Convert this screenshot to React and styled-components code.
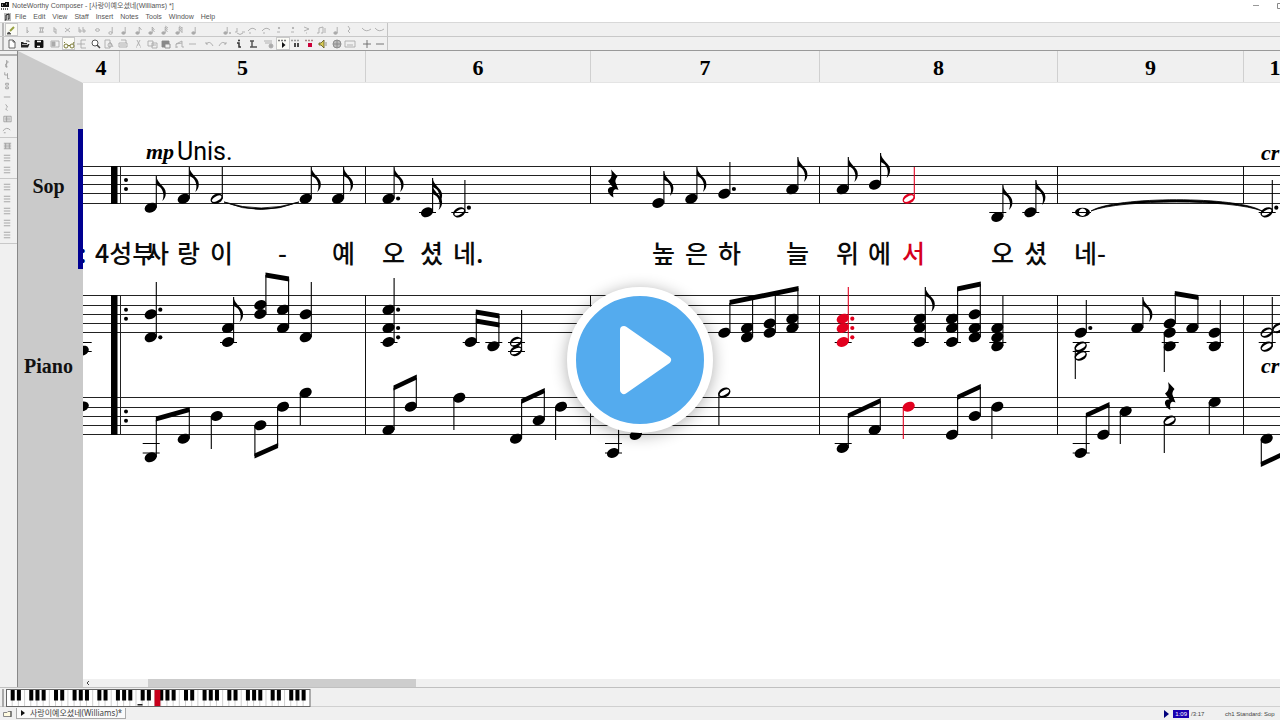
import React from "react";
import styled, { createGlobalStyle, css } from "styled-components";

const GlobalStyle = createGlobalStyle`
  * { box-sizing: border-box; }
  body { margin: 0; background: #f0f0f0; overflow: hidden; }
  button { font: inherit; color: inherit; border: 0; padding: 0; margin: 0; background: none; }
`;

const ui = `"Liberation Sans", "Noto Sans CJK KR", sans-serif`;
const serif = `"Liberation Serif", serif`;
const INK = "#000";
const RED = "#e2001f";

const Window = styled.div`
  position: relative;
  display: flex;
  flex-direction: column;
  height: 100vh;
  background: #f0f0f0;
  font-family: ${ui};
  font-size: 7px;
  color: #555;
  overflow: hidden;
`;
const TitleBar = styled.header`
  display: flex;
  align-items: center;
  height: 12px;
  background: #fff;
  gap: 2px;
`;
const Title = styled.h1`
  flex: 1;
  margin: 0;
  font-size: 7px;
  font-weight: 400;
  line-height: 12px;
  white-space: nowrap;
`;
const WindowButtons = styled.div`
  display: flex;
  gap: 16px;
  margin-right: -4px;
`;
const WindowButton = styled.button`
  display: flex;
  width: 8px;
  height: 12px;
  align-items: center;
`;
const MenuBar = styled.nav`
  display: flex;
  align-items: center;
  height: 11px;
  padding-left: 4px;
  gap: 4px;
  background: #fff;
  border-bottom: 1px solid #d8d8d8;
`;
const MenuItems = styled.div`
  display: flex;
  gap: 7px;
`;
const MenuButton = styled.button`
  font-size: 7px;
  line-height: 10px;
`;
const ToolBarRow = styled.div`
  display: flex;
  height: 14px;
  border-bottom: 1px solid ${(p) => (p.$last ? "#999" : "#c8c8c8")};
`;
const ToolBar = styled.div`
  display: flex;
  align-items: center;
  width: 388px;
  height: 100%;
  padding-left: 5px;
  border-right: 1px solid #c4c4c4;
  box-shadow: inset 2px 0 #f0f0f0, inset 4px 0 #b8b8b8;
`;
const ToolButton = styled.button`
  display: flex;
  align-items: center;
  justify-content: center;
  flex: 1;
  height: 13px;
  color: ${(p) => p.$tone || "#aaa"};
  ${(p) => p.$active && css`background: #fbfbf6; box-shadow: inset 0 0 0 1px #c9c9c9;`}
`;
const ToolGap = styled.span`
  flex: none;
  width: ${(p) => p.$w || 3}px;
`;
const Workspace = styled.main`
  display: flex;
  flex: 1;
  min-height: 0;
`;
const SideTools = styled.aside`
  display: flex;
  flex-direction: column;
  width: 18px;
  padding-top: 3px;
  border-right: 1px solid #888;
`;
const SideGroup = styled.div`
  display: flex;
  flex-direction: column;
  align-items: center;
  padding: 2px 2px 2px 0;
  border-bottom: 1px solid #c8c8c8;
  &:first-child { border-top: 2px solid #b0b0b0; }
`;
const SideButton = styled.button`
  display: flex;
  align-items: center;
  justify-content: center;
  width: 14px;
  height: ${(p) => p.$h}px;
  color: #999;
`;
const StaffPanel = styled.section`
  position: relative;
  width: 65px;
  background: #cacaca;
  clip-path: polygon(0 0, 100% 32px, 100% 100%, 0 100%);
  padding-top: 123px;
`;
const StaffName = styled.div`
  height: 24px;
  margin-bottom: 156px;
  padding-right: 4px;
  font: bold 20px/24px ${serif};
  text-align: center;
  color: #111;
`;
const ActiveStaff = styled.div`
  position: absolute;
  right: 0;
  top: 78px;
  width: 5px;
  height: 140px;
  background: #000091;
`;
const ScoreColumn = styled.section`
  display: flex;
  flex-direction: column;
  flex: 1;
  min-width: 0;
`;
const Ruler = styled.div`
  display: flex;
  height: 32px;
  border-bottom: 1px solid #e4e4e4;
  overflow: hidden;
`;
const RulerCell = styled.div`
  flex: none;
  width: ${(p) => p.$w}px;
  border-right: 1px solid #d0d0d0;
  font: bold 22px/34px ${serif};
  text-align: center;
  color: #000;
`;
const Canvas = styled.div`
  position: relative;
  flex: 1;
  min-height: 0;
  background: #fff;
  overflow: hidden;
`;
const Notation = styled.svg`
  display: block;
  width: 100%;
  height: 100%;
`;
const Mark = styled.span`
  position: absolute;
  left: ${(p) => p.$x - 83}px;
  top: ${(p) => p.$y - 83}px;
  white-space: nowrap;
  color: ${INK};
`;
const Lyric = styled(Mark)`
  font: 500 25px/32px "Noto Sans CJK KR", sans-serif;
  color: ${(p) => p.$color || "#0a0a0a"};
`;
const Dynamic = styled(Mark)`
  font: italic bold 22px/28px ${serif};
`;
const Direction = styled(Mark)`
  font: 25px/32px Roboto, sans-serif;
`;
const ScrollTrack = styled.div`
  display: flex;
  height: 8px;
  background: #f0f0f0;
`;
const ScrollArrow = styled.button`
  width: 10px;
  display: flex;
  align-items: center;
  justify-content: center;
  color: #444;
`;
const ScrollThumb = styled.div`
  width: 268px;
  margin-left: 55px;
  background: #cdcdcd;
`;
const KeyboardStrip = styled.div`
  height: 20px;
  padding: 1px 0 0 2px;
  border-top: 1px solid #c0c0c0;
  border-bottom: 1px solid #d0d0d0;
`;
const StatusBar = styled.footer`
  display: flex;
  align-items: center;
  height: 13px;
  padding-left: 3px;
  color: #444;
`;
const FileTab = styled.button`
  display: flex;
  align-items: center;
  gap: 5px;
  width: 110px;
  height: 11px;
  margin-left: 4px;
  padding-left: 4px;
  border: 1px solid #aaa;
  border-top: 0;
  background: #fafafa;
  font: 8px/10px "Noto Sans", "Noto Sans CJK KR", sans-serif;
  white-space: nowrap;
`;
const StatusRight = styled.div`
  display: flex;
  align-items: center;
  flex: 1;
  justify-content: flex-end;
  font-size: 6px;
  line-height: 10px;
`;
const Elapsed = styled.span`
  margin: 0 2px 0 4px;
  padding: 0 2px;
  line-height: 8px;
  background: #1a00b0;
  color: #fff;
`;
const Total = styled.span`
  width: 34px;
`;
const Channel = styled.span`
  width: 55px;
  white-space: nowrap;
`;
const PlayButton = styled.button`
  position: absolute;
  left: 50%;
  top: 50%;
  width: 146px;
  height: 146px;
  margin: -73px 0 0 -73px;
  border: 9px solid #fff;
  border-radius: 50%;
  background: #54abee;
  box-shadow: 0 2px 16px rgba(0, 0, 0, 0.32);
  svg { display: block; width: 128px; height: 128px; }
`;

/* ---- toolbar icons, drawn on a 12 x 10 grid ---- */
const note = (fill, flags = 0, stem = true) => (
  <>
    <ellipse cx="4.5" cy="8" rx="1.7" ry="1.3" fill={fill ? "currentColor" : "none"} />
    {stem && <path d="M6.2 8V2" />}
    {flags > 0 && <path d="M6.2 2L8.5 5" />}
    {flags > 1 && <path d="M6.2 4L8.5 7" />}
    {flags > 2 && <path d="M6.2 1L9 3" />}
  </>
);
const glyphs = {
  pencil: <><path d="M1 8.5L3 7L5 9H1" fill="#444" /><path d="M4 6L8 2" stroke="#97a040" strokeWidth="2" /></>,
  flat: <path d="M5 2V8Q8 6 5 5.500" />,
  sharp: <path d="M3 3H8M3 7H8M5 2L4 8M7 2L6 8" />,
  natural: <path d="M5 2V7H7M7 9V4H5" />,
  cross: <path d="M3 3L8 7M8 3L3 7" />,
  dflat: <path d="M3 2V7H5V5H3M7 2V7H9V5H7" />,
  whole: <ellipse cx="5.500" cy="5" rx="2" ry="1.300" />,
  half: note(false), quarter: note(true), eighth: note(true, 1), six: note(true, 2), thirty: note(true, 3),
  sixtyfour: <>{note(true, 3)}<path d="M9 2V8" /></>,
  dotted: <>{note(true)}<circle cx="9" cy="8" r=".6" fill="currentColor" /></>,
  tie: <path d="M1 7H3M8 7H11M3 8Q6 11 9 8M3 7V3" />,
  slur: <path d="M1 6Q5 1 9 5M2 8H4" />,
  stacc: <><circle cx="5" cy="3" r=".7" fill="currentColor" /><path d="M3 7H6" /></>,
  accent: <path d="M3 2L8 4L3 6M5 8H6" />,
  pair: <path d="M2 8H4V3L8 2V8H6M10 3V8" />,
  rest: <path d="M4 1L6 4L4 6L6 8" />,
  arc: <path d="M1 3Q5 8 10 4" />,
  page: <path d="M3 1H7L9 3V9H3ZM7 1V3H9" fill="#fff" stroke="#555" />,
  open: <><path d="M2 8.500V3H4L5 4H8V5H10.500L9 8.500Z" fill="#222" stroke="none" /><path d="M3 5.500H9" stroke="#bbb" /><path d="M7 2H10V3" stroke="#444" /></>,
  save: <><path d="M2 1.500H10V8.500H2Z" fill="#111" stroke="#111" /><path d="M4 2.500H8M4 7.500H7" stroke="#fff" strokeWidth="1.500" /></>,
  panel: <><path d="M2 2H10V8H2Z" /><path d="M3 3H6V7H3Z" fill="currentColor" /></>,
  glasses: <path d="M1 4L2 3M1 7Q1 5 3 5T5 7T3 9T1 7M7 7Q7 5 9 5T11 7T9 9T7 7M5 6.500H7M10 5L11 3" />,
  bracket: <path d="M10 1H5V9H10M1 5H9" />,
  zoom: <><circle cx="5" cy="4" r="3" fill="#fff" /><path d="M7 6L10 9" strokeWidth="1.500" /></>,
  preview: <><path d="M2 1H7V9H2ZM7 3L10 8" /><circle cx="7" cy="6" r="2" /></>,
  print: <path d="M2 4H10V8H2ZM4 1H9V4M3 6H9" />,
  cut: <path d="M4 1L7 7M7 1L4 7M3 8H4M7 8H8" />,
  copy: <path d="M1 2H6V7H1ZM5 4H10V9H5ZM6 6H9" />,
  paste: <><path d="M2 2H9V8H2Z" fill="currentColor" /><path d="M5 5H10V9H5Z" fill="#eee" /></>,
  bridge: <path d="M2 9V5L8 2V8M2 5L8 4M2 8H4M8 8H10" />,
  dash: <path d="M2 5H9" />,
  undo: <path d="M2 3V5H4M2 5Q6 1 9 7" />,
  redo: <path d="M9 3V5H7M9 5Q5 1 2 7" />,
  info: <><circle cx="6" cy="1.500" r="1" fill="#333" stroke="none" /><path d="M4 4H6V8H8" stroke="#333" strokeWidth="1.500" /></>,
  beam: <path d="M3 2H7M5 2V8M3 8H10" stroke="#555" strokeWidth="1.500" />,
  list: <><path d="M1 2H9M2 4H9" /><circle cx="8" cy="7" r="2" fill="currentColor" /></>,
  play: <><path d="M1 1.500H10" strokeWidth="1.500" strokeDasharray="2 1" /><path d="M5 3L8.500 6L5 9Z" fill="#111" stroke="none" /></>,
  pause: <><path d="M1 1.500H10" strokeWidth="1.500" strokeDasharray="2 1" /><path d="M5 4V8M8 4V8" stroke="#111" strokeWidth="1.500" /></>,
  stop: <><path d="M1 1.500H10" stroke="#a88" strokeWidth="1.500" strokeDasharray="2 1" /><path d="M4 4H8V8H4Z" fill="#cc0038" stroke="none" /></>,
  speaker: <><path d="M2 4H4L7 1V9L4 6H2Z" fill="#d9cc55" stroke="#66602b" /><path d="M9 3V7" /></>,
  globe: <><circle cx="6" cy="5" r="4" fill="#bbb" /><path d="M2 5H10M6 1V9" /></>,
  keys: <path d="M1 2H11V8H1ZM3 6H9" />,
  plus: <path d="M2 5H10M6 1V9" />,
  minus: <path d="M2 5H10" />,
  clef: <path d="M6 8H4V5L7 3L5 1V9" />,
  key: <path d="M3 2V5H6V3M6 5V9H8" />,
  time: <path d="M4 2H7V4H4ZM4 6H7V8H4Z" />,
  text: <path d="M2 2H10V8H2ZM3 4H9M3 6H9M5 2V8" />,
  bars: <path d="M2 2H10M2 4H10M2 6H10M2 8H10M4 2V8M8 2V8" />,
  lines: <path d="M2 2H9M2 5H9M2 8H9" />,
};
const Glyph = ({ name, size = 12 }) => (
  <svg width={size} height="10" viewBox="0 0 12 10" fill="none" stroke="currentColor" strokeWidth="0.900" aria-hidden="true">
    {glyphs[name]}
  </svg>
);

const noteTools = [
  ["pencil", "#555", true], "|", "flat", "sharp", "natural", "cross", "dflat", "|", "whole", "half", "quarter", "eighth",
  "six", "thirty", "sixtyfour", "|", "quarter", "||", "dotted", "tie", "slur", "slur", "stacc", "stacc", "accent", "pair",
  "|", "quarter", "rest", "|", "arc", "arc",
];
const fileTools = [
  ["page", "#555"], ["open", "#111"], ["save", "#111"], "|", "panel", ["glasses", "#6c6c23", true], "bracket", ["zoom", "#444"],
  "preview", "print", "|", "cut", "copy", ["paste", "#888"], "bridge", "dash", "|", "undo", "redo", "|", "info", "beam", "|",
  "list", ["play", "#777", true], ["pause", "#999"], ["stop", "#777"], ["speaker", "#887"], ["globe", "#888"], "keys", "|",
  ["plus", "#666"], ["minus", "#666"],
];
const Tools = ({ items, label }) => (
  <ToolBar role="toolbar" aria-label={label}>
    {items.map((it, i) => {
      if (it === "|") return <ToolGap key={i} />;
      if (it === "||") return <ToolGap key={i} $w={18} />;
      const [name, tone, active] = Array.isArray(it) ? it : [it];
      return (
        <ToolButton key={i} aria-label={name} $tone={tone} $active={active}>
          <Glyph name={name} />
        </ToolButton>
      );
    })}
  </ToolBar>
);

const sideGroups = [
  { h: 11, items: ["clef", "key", "time", "dash", "rest", "text", "slur"] },
  { h: 12, items: ["bars", "lines", "lines"] },
  { h: 12, items: ["lines", "lines", "lines", "lines", "lines"] },
];

/* ---- notation ---- */
const Head = ({ x, y, open, color = INK }) =>
  open ? (
    <path
      transform={`translate(${x} ${y}) rotate(-28)`}
      d="M-6.500 0A6.500 4.700 0 1 1 6.500 0A6.500 4.700 0 1 1 -6.500 0ZM-5.200 0.500A5.200 2.200 0 1 0 5.200 -0.500A5.200 2.200 0 1 0 -5.200 0.500Z"
      fill={color}
      fillRule="evenodd"
    />
  ) : (
    <ellipse cx={x} cy={y} rx="6.300" ry="4.700" transform={`rotate(-24 ${x} ${y})`} fill={color} />
  );

const Flag = ({ x, y, color }) => (
  <path
    d={`M${x} ${y}C${x + 1} ${y + 8} ${x + 9.5} ${y + 10} ${x + 9.5} ${y + 17}C${x + 9.5} ${y + 21} ${x + 8} ${y + 23} ${x + 6} ${y + 25}C${x + 9} ${y + 18} ${x + 6} ${y + 11} ${x} ${y + 9}Z`}
    fill={color}
  />
);

function Chord({ x, ys, stem, down, flags = 0, open, dots = [], ledgers = [], color = INK }) {
  const sx = down ? x - 5.4 : x + 5.6;
  const start = down ? Math.min(...ys) : Math.max(...ys);
  return (
    <g>
      {ledgers.map((l) => <path key={l} d={`M${x - 8} ${l}H${x + 9}`} stroke={INK} strokeWidth="1" />)}
      {ys.map((y) => <Head key={y} x={x} y={y} open={open} color={color} />)}
      {stem !== undefined && <path d={`M${sx} ${start}V${stem}`} stroke={color} strokeWidth="1.100" />}
      {flags > 0 && <Flag x={sx} y={stem} color={color} />}
      {flags > 1 && <Flag x={sx} y={stem + 7} color={color} />}
      {dots.map((d) => <circle key={d} cx={x + 9.6} cy={d} r="2.100" fill={color} />)}
    </g>
  );
}
const Beam = ({ b: [x1, y1, x2, y2] }) => (
  <path d={`M${x1 - 0.5} ${y1}L${x2 + 0.5} ${y2}V${y2 + 5}L${x1 - 0.5} ${y1 + 5}Z`} fill={INK} />
);
const QuarterRest = ({ x, y }) => (
  <path
    transform={`translate(${x} ${y})`}
    d="M-1 0L5.500 7C3 10 3 12 4 14L6.500 20.500C3 18.500 0 20 1.500 28C-6 24 -5.500 16.500 0.500 17.500L-4 11.500C-0.500 9 0.500 6 -1 0Z"
    fill={INK}
  />
);

const soprano = [
  { x: 150.7, ys: [207.700], stem: 176, flags: 1 },
  { x: 183.7, ys: [198.700], stem: 167, flags: 1 },
  { x: 216.7, ys: [198.700], stem: 167, open: true },
  { x: 305.7, ys: [198.700], stem: 167, flags: 1 },
  { x: 338, ys: [198.700], stem: 167, flags: 1 },
  { x: 388.5, ys: [198.700], stem: 167, flags: 1, dots: [198.500] },
  { x: 427, ys: [212.300], stem: 178, flags: 2, ledgers: [212.500] },
  { x: 459.3, ys: [212.300], stem: 180, open: true, dots: [207.700], ledgers: [212.500] },
  { x: 658.3, ys: [203], stem: 171, flags: 1 },
  { x: 691.3, ys: [198.700], stem: 167, flags: 1 },
  { x: 724.3, ys: [193.700], stem: 162, dots: [189] },
  { x: 792.3, ys: [189.300], stem: 157, flags: 1 },
  { x: 842.7, ys: [189.300], stem: 157, flags: 1 },
  { x: 875, ys: [184.700], stem: 153, flags: 1 },
  { x: 908.7, ys: [198.700], stem: 167, open: true, color: RED },
  { x: 997.3, ys: [217], stem: 185, flags: 1, ledgers: [212.500] },
  { x: 1030.3, ys: [212.300], stem: 180, flags: 1, ledgers: [212.500] },
  { x: 1266.7, ys: [212.300], stem: 180, open: true, dots: [207.700], ledgers: [212.500] },
];
const L1 = 342.5, L2 = 351.5;
const treble = [
  { x: 82.7, ys: [350.700], ledgers: [L1, L2] },
  { x: 150.7, ys: [314.300, 337.300], stem: 282, dots: [309.700, 337.300] },
  { x: 228, ys: [328, 342], stem: 297, flags: 1, ledgers: [L1] },
  { x: 260.3, ys: [305, 314], stem: 275 },
  { x: 283, ys: [309.700, 328], stem: 279 },
  { x: 305.7, ys: [314.300, 337.300], stem: 282 },
  { x: 388.5, ys: [309.700, 328, 342], stem: 278, dots: [309.700, 328, 337.300], ledgers: [L1] },
  { x: 470.7, ys: [342], stem: 312, ledgers: [L1] },
  { x: 493.3, ys: [346.300], stem: 316, ledgers: [L1] },
  { x: 516, ys: [342, 351], stem: 310, open: true, ledgers: [L1, L2] },
  { x: 724.3, ys: [332.700], stem: 303 },
  { x: 747, ys: [328, 337.300], stem: 299 },
  { x: 769.7, ys: [323.500, 332.700], stem: 294 },
  { x: 792.3, ys: [318.700, 328], stem: 288 },
  { x: 842.7, ys: [318.700, 328, 342], stem: 287, dots: [318.700, 328, 337.300], ledgers: [L1], color: RED },
  { x: 919.7, ys: [318.700, 328, 342], stem: 287, flags: 1, ledgers: [L1] },
  { x: 952, ys: [318.700, 328, 342], stem: 288, ledgers: [L1] },
  { x: 974.7, ys: [314.300, 328, 337.300], stem: 284 },
  { x: 997.3, ys: [328, 337.300, 346.300], stem: 296, ledgers: [L1] },
  { x: 1080.7, ys: [332.700], stem: 300, dots: [328] },
  { x: 1080.7, ys: [346.700, 355.700], stem: 379, down: true, open: true, ledgers: [L1, L2] },
  { x: 1137.3, ys: [328], stem: 297, flags: 1 },
  { x: 1169.7, ys: [323.500], stem: 293 },
  { x: 1169.7, ys: [332.700, 346.300], stem: 372, down: true, ledgers: [L1] },
  { x: 1192.3, ys: [328], stem: 297 },
  { x: 1214.7, ys: [332.700, 346.300], stem: 300, ledgers: [L1] },
  { x: 1266.7, ys: [332.700, 346.700], stem: 297, open: true, ledgers: [L1] },
  { x: 1278.5, ys: [328], open: true },
];
const B1 = 443.5, B2 = 453;
const bass = [
  { x: 82.7, ys: [406.500] },
  { x: 150.7, ys: [457.300], stem: 420, ledgers: [B1, B2] },
  { x: 183.7, ys: [438.700], stem: 410 },
  { x: 216.7, ys: [416], stem: 449, down: true },
  { x: 260.3, ys: [425.300], stem: 456, down: true },
  { x: 283, ys: [406.700], stem: 446, down: true },
  { x: 305.7, ys: [392.700], stem: 425, down: true },
  { x: 388.5, ys: [430], stem: 388 },
  { x: 410.7, ys: [406.700], stem: 378 },
  { x: 459.3, ys: [397.700], stem: 430, down: true },
  { x: 516, ys: [438.700], stem: 402 },
  { x: 538.7, ys: [420.300], stem: 391 },
  { x: 561, ys: [406.700], stem: 440, down: true },
  { x: 613, ys: [453], stem: 410, ledgers: [B1, B2] },
  { x: 635.7, ys: [435], stem: 405 },
  { x: 724.3, ys: [392.700], stem: 425, down: true, open: true },
  { x: 842.7, ys: [448], stem: 416, ledgers: [B1] },
  { x: 874.7, ys: [430], stem: 401 },
  { x: 908.7, ys: [406.700], stem: 439, down: true, color: RED },
  { x: 952, ys: [434.700], stem: 398 },
  { x: 974.7, ys: [416], stem: 387 },
  { x: 997.3, ys: [406.700], stem: 439, down: true },
  { x: 1080.7, ys: [453], stem: 416, ledgers: [B1, B2] },
  { x: 1103.3, ys: [434.700], stem: 405 },
  { x: 1125.7, ys: [411.300], stem: 444, down: true },
  { x: 1169.7, ys: [420.700], stem: 453, down: true, open: true },
  { x: 1214.7, ys: [402], stem: 434, down: true },
  { x: 1266.7, ys: [438.700], stem: 464, down: true },
];
const beams = [
  [266, 272.5, 288.6, 276.500], [476.3, 309.5, 499, 313.500], [476.3, 318.5, 499, 322.500], [730, 300, 798, 286],
  [957.6, 286.5, 980.3, 281.500], [1175.3, 291, 1198, 295], [156.3, 416.5, 189.3, 407], [255, 453.5, 277.6, 443],
  [394, 385.5, 416.3, 374.500], [521.6, 399, 544.3, 388], [848.3, 413.5, 880.3, 398], [957.6, 395, 980.3, 384],
  [1086.3, 413, 1109, 402], [1261.3, 462, 1284, 451],
];
const staves = [[166.5, 175.5, 184.5, 193.5, 203.5], [295.5, 305.5, 314.5, 323.5, 332.5], [397.5, 407.5, 416.5, 425.5, 434.500]];
const barlines = [365.5, 590.5, 819.5, 1057.5, 1243.500];
const repeatDots = [180, 189, 309.7, 318.7, 411.5, 420.700];

const lyrics = [
  [79, ":", "#000060"], [95, "4성부"], [146, "사"], [177, "랑"], [210, "이"], [278, "-"], [332, "예"], [382, "오"], [420, "셨"],
  [453, "네."], [652, "높"], [685, "은"], [718, "하"], [786, "늘"], [836, "위"], [868, "에"], [902, "서", "#d6001c"],
  [991, "오"], [1024, "셨"], [1074, "네-"],
];

const Score = () => (
  <Canvas>
    <Notation role="img" aria-label="Score">
      <g transform="translate(-83 -83)">
        {staves.flat().map((y) => <path key={y} d={`M83 ${y}H4000`} stroke="#222" shapeRendering="crispEdges" />)}
        {barlines.map((x) => <path key={x} d={`M${x} 166V204M${x} 295V435`} stroke="#111" shapeRendering="crispEdges" />)}
        <path d="M111 166H117.500V204H111ZM111 295H117.500V435H111Z" fill={INK} />
        <path d="M120.500 166V204M120.500 295V435" stroke="#222" />
        {repeatDots.map((y) => <circle key={y} cx="126" cy={y} r="2" fill={INK} />)}
        {soprano.map((n, i) => <Chord key={i} {...n} />)}
        {treble.map((n, i) => <Chord key={i} {...n} />)}
        {bass.map((n, i) => <Chord key={i} {...n} />)}
        {beams.map((b, i) => <Beam key={i} b={b} />)}
        <QuarterRest x={612} y={169.500} />
        <QuarterRest x={1169} y={382} />
        <path d="M1072 212.500H1091" stroke={INK} />
        <path d="M1075 212.300A7.500 4.600 0 1 1 1090 212.300A7.500 4.600 0 1 1 1075 212.300ZM1079 211.500A3.600 3.400 0 1 0 1086 213A3.600 3.400 0 1 0 1079 211.500Z" fill={INK} fillRule="evenodd" />
        <path d="M224 202Q261 214 299 202Q261 217 224 202Z" fill={INK} stroke={INK} strokeWidth="0.800" />
        <path d="M1091 211C1115 196 1238 196 1262 211C1232 199 1121 199 1091 211Z" fill={INK} stroke={INK} strokeWidth="0.800" />
      </g>
    </Notation>
    <Dynamic $x={146} $y={138}>mp</Dynamic>
    <Direction $x={177} $y={136}>Unis.</Direction>
    <Dynamic $x={1261} $y={139}>cr</Dynamic>
    <Dynamic $x={1261} $y={352}>cr</Dynamic>
    {lyrics.map(([x, t, c]) => <Lyric key={x} $x={x} $y={236} $color={c}>{t}</Lyric>)}
  </Canvas>
);

const KEY = 6.19;
const Keyboard = () => {
  const black = [];
  for (let o = 0; o < 7; o++) [1, 2, 4, 5, 6].forEach((k) => black.push(4 + (o * 7 + k) * KEY));
  return (
    <svg width="310" height="18" viewBox="0 0 310 18" role="img" aria-label="Keyboard">
      <path d="M1 0V18" stroke="#aaa" strokeWidth="2" />
      <rect x="4.500" y=".5" width="303.500" height="17" fill="#fff" stroke="#666" />
      {Array.from({ length: 48 }, (_, i) => (
        <path key={i} d={`M${4 + (i + 1) * KEY} 1V17`} stroke="#bbb" strokeWidth=".7" />
      ))}
      {black.map((x) => <rect key={x} x={x - 1.5} y="1" width="4" height="10.500" fill="#000" />)}
      <rect x={4 + 24 * KEY} y="1" width="5.800" height="16" fill="#c8001c" />
      <rect x="135.500" y="15" width="5" height="1.500" fill="#222" />
    </svg>
  );
};

export default function App() {
  return (
    <Window>
      <GlobalStyle />
      <TitleBar>
        <svg width="10" height="10" viewBox="0 0 10 10" aria-hidden="true">
          <path d="M1 2H5V1H9V6H1Z" fill="#111" />
          <path d="M2 4H3M6 3H7" stroke="#fff" />
          <path d="M1 8H9" stroke="#333" strokeDasharray="1 1" strokeWidth="1.500" />
        </svg>
        <Title>NoteWorthy Composer - [사랑이예오셨네(Williams) *]</Title>
        <WindowButtons>
          <WindowButton aria-label="Minimize">
            <svg width="8" height="8"><path d="M1 3.500H7" stroke="#999" /></svg>
          </WindowButton>
          <WindowButton aria-label="Maximize">
            <svg width="8" height="8"><path d="M1.500 1.500H6.500V6.500H1.500Z" fill="none" stroke="#888" /></svg>
          </WindowButton>
        </WindowButtons>
      </TitleBar>
      <MenuBar>
        <svg width="7" height="8" viewBox="0 0 7 8" aria-hidden="true">
          <path d="M0 0H7V8H0Z" fill="#bbb" />
          <path d="M2 7V2L5 1V6M1 7H2M4 6H5" stroke="#222" fill="none" />
        </svg>
        <MenuItems>
          {["File", "Edit", "View", "Staff", "Insert", "Notes", "Tools", "Window", "Help"].map((m) => (
            <MenuButton key={m}>{m}</MenuButton>
          ))}
        </MenuItems>
      </MenuBar>
      <ToolBarRow><Tools items={noteTools} label="Notes" /></ToolBarRow>
      <ToolBarRow $last><Tools items={fileTools} label="Standard" /></ToolBarRow>
      <Workspace>
        <SideTools aria-label="Insert tools">
          {sideGroups.map((g, i) => (
            <SideGroup key={i}>
              {g.items.map((n, j) => (
                <SideButton key={j} $h={g.h} aria-label={n}><Glyph name={n} size={11} /></SideButton>
              ))}
            </SideGroup>
          ))}
        </SideTools>
        <StaffPanel>
          <StaffName>Sop</StaffName>
          <StaffName>Piano</StaffName>
          <ActiveStaff />
        </StaffPanel>
        <ScoreColumn>
          <Ruler>
            {[[37, 4], [246, 5], [225, 6], [229, 7], [238, 8], [186, 9], [74, 10]].map(([w, n]) => (
              <RulerCell key={n} $w={w}>{n}</RulerCell>
            ))}
          </Ruler>
          <Score />
          <ScrollTrack>
            <ScrollArrow aria-label="Scroll left">
              <svg width="4" height="6" viewBox="0 0 4 6"><path d="M3 1L1 3L3 5" fill="none" stroke="currentColor" /></svg>
            </ScrollArrow>
            <ScrollThumb />
          </ScrollTrack>
        </ScoreColumn>
      </Workspace>
      <KeyboardStrip><Keyboard /></KeyboardStrip>
      <StatusBar>
        <svg width="9" height="8" viewBox="0 0 9 8" aria-hidden="true">
          <path d="M.5 2.500H4L5 1.500H8V6.500H.5Z" fill="#fffbe0" stroke="#888" />
          <path d="M8 1V7" stroke="#444" />
        </svg>
        <FileTab>
          <svg width="4" height="6"><path d="M0 0L4 3L0 6Z" fill="#111" /></svg>
          사랑이예오셨네(Williams)*
        </FileTab>
        <StatusRight>
          <svg width="5" height="8"><path d="M0 0L5 4L0 8Z" fill="#00007c" /></svg>
          <Elapsed>1:09</Elapsed>
          <Total>/3:17</Total>
          <Channel>ch1 Standard: Sop</Channel>
        </StatusRight>
      </StatusBar>
      <PlayButton aria-label="Play">
        <svg viewBox="0 0 128 128" aria-hidden="true">
          <path d="M48 34L91 64L48 94Z" fill="#fff" stroke="#fff" strokeWidth="8" strokeLinejoin="round" />
        </svg>
      </PlayButton>
    </Window>
  );
}
